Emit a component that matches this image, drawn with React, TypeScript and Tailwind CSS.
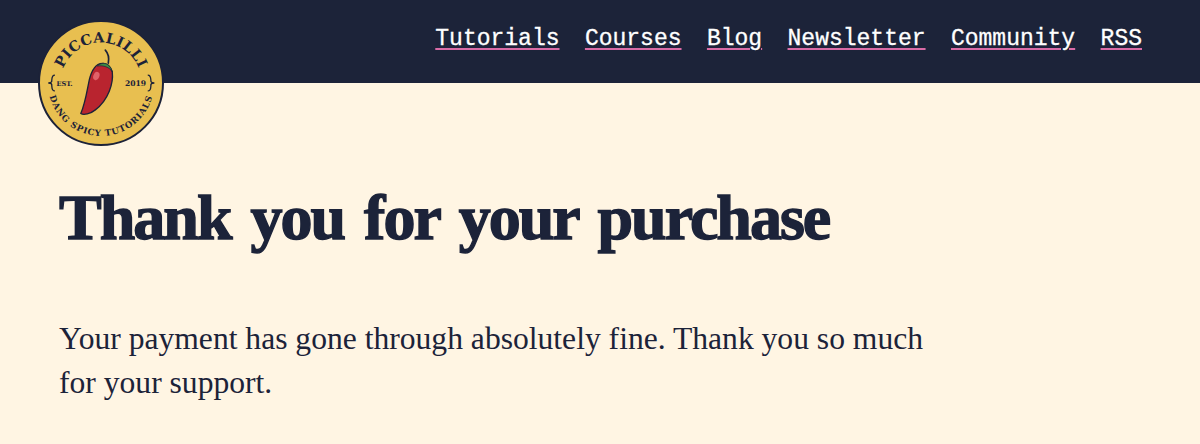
function Logo() {
  const slab = '"DejaVu Serif", serif';
  return (
    <svg viewBox="53 28 380 380" className="absolute left-[38px] top-[20px] w-[126px] h-[126px]">
      <defs>
        <path id="topArc" d="M 121 218 A 122 122 0 0 1 365 218" />
        <path id="bottomArc" d="M 83 218 A 160 160 0 0 0 403 218" />
      </defs>
      <circle cx="243" cy="218" r="187" fill="#e8bf50" stroke="#1c2238" strokeWidth="6" />
      <text fontFamily={slab} fontWeight="700" fontSize="43" fill="#1c2238" letterSpacing="1" textAnchor="middle">
        <textPath href="#topArc" startOffset="50%">PICCALILLI</textPath>
      </text>
      <text fontFamily={slab} fontWeight="700" fontSize="26" fill="#1c2238" letterSpacing="2.5" textAnchor="middle">
        <textPath href="#bottomArc" startOffset="50%">DANG SPICY TUTORIALS</textPath>
      </text>
      <text x="133" y="226" fontFamily={slab} fontWeight="700" fontSize="20" fill="#1c2238" textAnchor="middle">EST.</text>
      <text x="347" y="227" fontFamily={slab} fontWeight="700" fontSize="23" fill="#1c2238" textAnchor="middle">2019</text>
      <path d="M 104 194 C 92 194 96 208 94 214 C 93 218 88 218 84 218 C 88 218 93 218 94 222 C 96 228 92 242 104 242" fill="none" stroke="#1c2238" strokeWidth="4" />
      <path d="M 384 194 C 396 194 392 208 394 214 C 395 218 400 218 404 218 C 400 218 395 218 394 222 C 392 228 396 242 384 242" fill="none" stroke="#1c2238" strokeWidth="4" />
      <path d="M 265 158 C 268 142 266 130 256 119" fill="none" stroke="#1c2238" strokeWidth="5" strokeLinecap="round" />
      <path d="M 222 174 C 235 155 265 150 277 184 C 281 218 266 268 226 299 C 211 311 191 316 182 310 C 195 282 201 240 208 207 C 212 192 216 182 222 174 Z" fill="#b9242f" stroke="#1c2238" strokeWidth="4" strokeLinejoin="round" />
      <path d="M 232 167 C 245 154 268 154 277 184 C 268 170 250 164 232 167 Z" fill="#3d8a45" stroke="#1c2238" strokeWidth="2" />
      <ellipse cx="229" cy="197" rx="9" ry="13" fill="#e0626a" transform="rotate(20 229 197)" />
    </svg>
  );
}

export default function App() {
  const links = ["Tutorials", "Courses", "Blog", "Newsletter", "Community", "RSS"];
  return (
    <div className="min-h-[444px] bg-[#fff5e3] text-[#1c2339] overflow-hidden">
      <header className="h-[83px] bg-[#1c2339] flex justify-end items-start pr-[58px] pt-[27px] relative">
        <nav className="flex gap-[25.4px]">
          {links.map((l) => (
            <a key={l} className="text-[23px] leading-[24px] text-white underline decoration-[#d96ba6] decoration-2 underline-offset-[3px] [-webkit-text-stroke:0.3px_#ffffff]" style={{ fontFamily: '"Liberation Mono", monospace' }}>{l}</a>
          ))}
        </nav>
        <Logo />
      </header>
      <main className="pl-[59px]">
        <h1 className="mt-[100px] text-[64px] leading-[70px] font-bold tracking-[-2px] [word-spacing:6px] [-webkit-text-stroke:1.4px_#1c2339]" style={{ fontFamily: '"Liberation Serif", serif' }}>Thank you for your purchase</h1>
        <p className="mt-[64px] w-[880px] text-[31.6px] leading-[44px]" style={{ fontFamily: '"Liberation Serif", serif' }}>Your payment has gone through absolutely fine. Thank you so much for your support.</p>
      </main>
    </div>
  );
}
